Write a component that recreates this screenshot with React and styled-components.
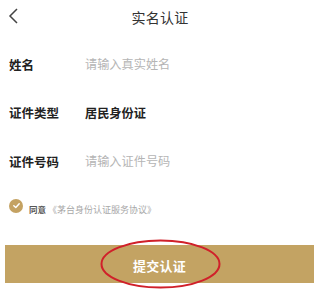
import styled, { createGlobalStyle } from "styled-components";

const GlobalStyle = createGlobalStyle`
  html, body {
    margin: 0;
    padding: 0;
    background: #fff;
    font-family: "Noto Sans CJK SC", "Noto Sans", sans-serif;
  }
`;

const Page = styled.div`
  position: relative;
  width: 320px;
  height: 293px;
  overflow: hidden;
  background: #fff;
`;

const Header = styled.div`
  position: relative;
  height: 34px;
  display: flex;
  align-items: center;
  justify-content: center;
`;

const BackButton = styled.button`
  position: absolute;
  left: 0;
  top: 0;
  width: 30px;
  height: 32px;
  padding: 0;
  border: none;
  background: none;
  display: flex;
  align-items: flex-start;
`;

const Title = styled.h1`
  margin: 0;
  font-size: 14px;
  font-weight: 400;
  color: #333;
  letter-spacing: 0.2px;
`;

const Form = styled.div`
  padding: 6px 10px 0 9px;
  display: flex;
  flex-direction: column;
`;

const Row = styled.div`
  height: 48.5px;
  display: flex;
  align-items: center;
`;

const Label = styled.span`
  width: 76px;
  font-size: 12.5px;
  font-weight: 700;
  color: #222;
`;

const Value = styled.span`
  font-size: 12.2px;
  font-weight: ${(p) => (p.$placeholder ? 400 : 700)};
  color: ${(p) => (p.$placeholder ? "#b5b5b5" : "#222")};
`;

const Agree = styled.div`
  height: 40px;
  padding-left: 9px;
  display: flex;
  align-items: center;
  gap: 6px;
`;

const Check = styled.span`
  width: 14px;
  height: 14px;
  border-radius: 50%;
  background: #c4a262;
  display: flex;
  align-items: center;
  justify-content: center;
`;

const AgreeText = styled.span`
  font-size: 8.5px;
  color: #555;
  font-weight: 700;
`;

const Protocol = styled.span`
  font-size: 9px;
  color: #a8a8a8;
  margin-left: 2px;
`;

const Submit = styled.button`
  display: block;
  margin: 19.5px 6px 0 5px;
  width: 309px;
  height: 38px;
  border: none;
  background: #c3a363;
  color: #fff;
  font-family: "Noto Sans CJK SC", "Noto Sans", sans-serif;
  font-size: 13px;
  font-weight: 700;
  letter-spacing: 0.3px;
  padding: 2px 0 0;
`;

const Mark = styled.svg`
  position: absolute;
  left: 0;
  top: 0;
  pointer-events: none;
`;

export default function App() {
  return (
    <Page>
      <GlobalStyle />
      <Header>
        <BackButton aria-label="back">
          <svg width="30" height="32" viewBox="0 0 30 32">
            <polyline points="17,9 10,16 17,23" fill="none" stroke="#444" strokeWidth="1.5" />
          </svg>
        </BackButton>
        <Title>实名认证</Title>
      </Header>

      <Form>
        <Row>
          <Label>姓名</Label>
          <Value $placeholder>请输入真实姓名</Value>
        </Row>
        <Row>
          <Label>证件类型</Label>
          <Value>居民身份证</Value>
        </Row>
        <Row>
          <Label>证件号码</Label>
          <Value $placeholder>请输入证件号码</Value>
        </Row>
      </Form>

      <Agree>
        <Check>
          <svg width="9" height="9" viewBox="0 0 10 10">
            <polyline points="2,5.2 4.2,7.3 8,3" fill="none" stroke="#fff" strokeWidth="1.6" strokeLinecap="round" strokeLinejoin="round" />
          </svg>
        </Check>
        <span>
          <AgreeText>同意</AgreeText>
          <Protocol>《茅台身份认证服务协议》</Protocol>
        </span>
      </Agree>

      <Submit>提交认证</Submit>

      <Mark width="320" height="293">
        <ellipse cx="160.5" cy="264" rx="59" ry="23.5" fill="none" stroke="#d0202a" strokeWidth="2" />
      </Mark>
    </Page>
  );
}
